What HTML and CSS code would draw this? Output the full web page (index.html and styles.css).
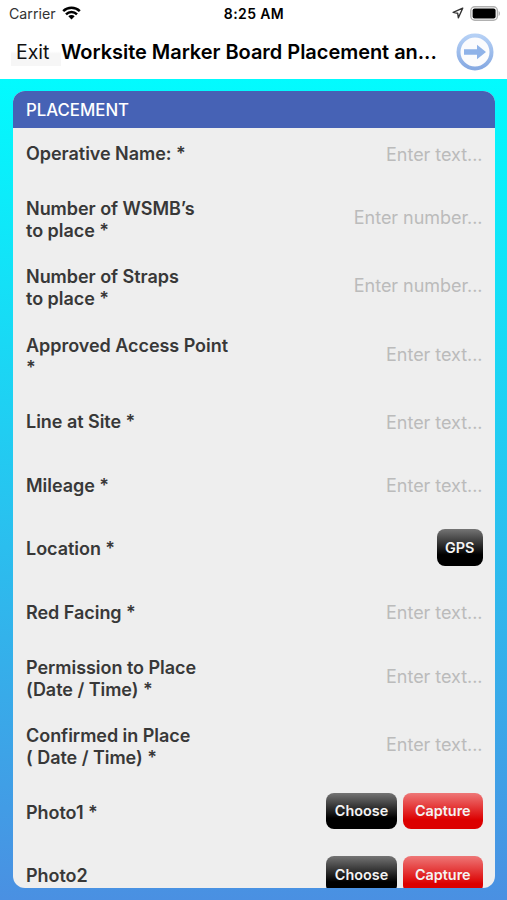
FILE: index.html
```html
<!DOCTYPE html>
<html lang="en">
<head>
  <meta charset="UTF-8" />
  <meta name="viewport" content="width=device-width, initial-scale=1.0"/>
  <title>Worksite Marker Board Placement</title>
  <link rel="stylesheet" href="styles.css">
</head>
<body>
  <div class="status-bar">
    <div class="carrier">
      <span>Carrier</span>
      <svg width="19" height="14" viewBox="0 0 19 14">
        <path d="M1.2 5.1a11.8 11.8 0 0 1 16.6 0M4 8.3a7.8 7.8 0 0 1 11 0" fill="none" stroke="#000" stroke-width="2.5"/>
        <path d="M6.3 10.2a4.6 4.6 0 0 1 6.4 0L9.5 13.5z"/>
      </svg>
    </div>
    <div class="time">8:25 AM</div>
    <div class="status-icons">
      <svg width="12" height="12" viewBox="0 0 12 12">
        <path d="M10.7 1.2L1.2 5.4l4.5.9.7 4.5z" fill="none" stroke="#333" stroke-width="1.4" stroke-linejoin="round"/>
      </svg>
      <svg width="31" height="15" viewBox="0 0 31 15">
        <rect x="0.8" y="0.8" width="26.6" height="13.4" rx="4" fill="#fff" stroke="#b0b0b0" stroke-width="1.4"/>
        <rect x="2.6" y="2.6" width="23" height="9.8" rx="2"/>
        <path d="M28.7 5v5c1.6-.7 1.6-4.3 0-5z" fill="#aaa"/>
      </svg>
    </div>
  </div>

  <header>
    <button class="exit">Exit</button>
    <h1>Worksite Marker Board Placement an...</h1>
    <button class="next">
      <svg width="38" height="38" viewBox="0 0 38 38">
        <defs>
          <linearGradient id="ring" x1="0" y1="0" x2="0" y2="1">
            <stop offset="0" stop-color="#b5d0f5"/>
            <stop offset="1" stop-color="#86a9e2"/>
          </linearGradient>
        </defs>
        <circle cx="19" cy="19" r="16.5" fill="#fbfbfd" stroke="url(#ring)" stroke-width="4"/>
        <path d="M8 16.2h13v-4.4L30 19l-9 7.2v-4.4H8z" fill="#8fb2e8"/>
      </svg>
    </button>
  </header>

  <main>
    <div class="card">
      <h2>PLACEMENT</h2>
      <div class="row"><label>Operative Name: *</label><span class="field">Enter text...</span></div>
      <div class="row"><label>Number of WSMB’s<br>to place *</label><span class="field">Enter number...</span></div>
      <div class="row"><label>Number of Straps<br>to place *</label><span class="field">Enter number...</span></div>
      <div class="row"><label>Approved Access Point<br>*</label><span class="field">Enter text...</span></div>
      <div class="row"><label>Line at Site *</label><span class="field">Enter text...</span></div>
      <div class="row"><label>Mileage *</label><span class="field">Enter text...</span></div>
      <div class="row">
        <label>Location *</label>
        <div class="buttons"><button class="btn gps">GPS</button></div>
      </div>
      <div class="row"><label>Red Facing *</label><span class="field">Enter text...</span></div>
      <div class="row"><label>Permission to Place<br>(Date / Time) *</label><span class="field">Enter text...</span></div>
      <div class="row"><label>Confirmed in Place<br>( Date / Time) *</label><span class="field">Enter text...</span></div>
      <div class="row">
        <label>Photo1 *</label>
        <div class="buttons"><button class="btn choose">Choose</button><button class="btn capture">Capture</button></div>
      </div>
      <div class="row">
        <label>Photo2</label>
        <div class="buttons"><button class="btn choose">Choose</button><button class="btn capture">Capture</button></div>
      </div>
    </div>
  </main>
</body>
</html>
```

FILE: styles.css
```css
* {
  box-sizing: border-box;
}
body {
  font-family: Inter, "Liberation Sans", sans-serif;
  margin: 0;
  height: 900px;
  overflow: hidden;
  display: flex;
  flex-direction: column;
  background: #fff;
}
svg {
  display: block;
}
button {
  font-family: inherit;
  border: none;
  padding: 0;
  cursor: pointer;
}
.status-bar {
  height: 27px;
  padding: 0 6px 0 9px;
  display: grid;
  grid-template-columns: 1fr auto 1fr;
  align-items: center;
  color: #000;
}
.carrier {
  display: flex;
  align-items: center;
  gap: 6px;
  font-size: 14.2px;
  color: #333;
}
.time {
  font-size: 14px;
  font-weight: 600;
  letter-spacing: 0.4px;
  margin-right: 2px;
}
.status-icons {
  display: flex;
  align-items: center;
  justify-content: flex-end;
  gap: 6px;
}
.status-icons,
.carrier svg {
  margin-top: -1px;
}
header {
  height: 52px;
  padding: 0 13.5px 2px 11px;
  display: flex;
  align-items: center;
}
.exit {
  width: 50px;
  height: 27px;
  padding-left: 5px;
  text-align: left;
  font-size: 19.5px;
  color: #111;
  background: linear-gradient(#fff 45%, #f6f6f6 55%);
}
h1 {
  flex: 1;
  margin: 0;
  font-size: 20px;
  font-weight: 600;
  letter-spacing: -0.04px;
  white-space: nowrap;
}
.next {
  background: none;
}
main {
  flex: 1;
  padding: 12px 12px 12px 13px;
  background: linear-gradient(#02fbfe, #4a90e2);
}
.card {
  height: 797px;
  overflow: hidden;
  border-radius: 12px;
  background: #eee;
}
h2 {
  margin: 0;
  height: 37px;
  padding: 1px 0 0 13px;
  line-height: 37px;
  font-size: 16.8px;
  font-weight: 500;
  color: #fff;
  background: #4662b5;
}
.row {
  display: flex;
  justify-content: space-between;
  align-items: flex-start;
  padding: 6.8px 12.5px 17.4px 13px;
}
label {
  min-height: 39.3px;
  display: flow-root;
  align-content: center;
  line-height: 22px;
  font-size: 18px;
  font-weight: 600;
  letter-spacing: -0.04px;
  color: #383838;
}
.field {
  line-height: 39.2px;
  font-size: 18px;
  letter-spacing: -0.04px;
  color: #bbb;
}
.buttons {
  display: flex;
  gap: 6px;
}
.btn {
  height: 36.5px;
  margin-top: -0.6px;
  border-radius: 8px;
  font-size: 14.4px;
  font-weight: 600;
  color: #f4f4f4;
  background: linear-gradient(#747474, #000 70%);
}
.gps {
  width: 45.5px;
}
.choose {
  width: 71px;
}
.capture {
  width: 79.5px;
  background: linear-gradient(#ee7777, #dc0000 75%);
}
```
